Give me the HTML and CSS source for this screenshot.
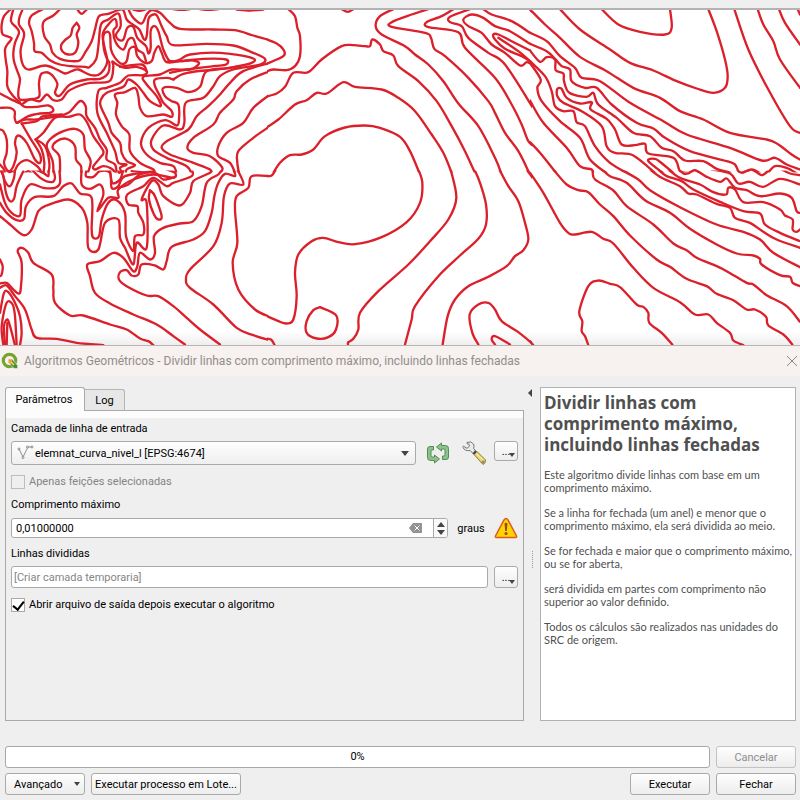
FILE: index.html
```html
<!DOCTYPE html>
<html lang="pt-BR">
<head>
<meta charset="utf-8">
<meta name="viewport" content="width=device-width, initial-scale=1">
<title>Algoritmos Geométricos</title>
<link rel="stylesheet" href="styles.css">
</head>
<body>
<div class="toolbar-edge"></div>
<svg class="map" viewBox="0 10 800 336" preserveAspectRatio="xMidYMid slice" aria-hidden="true"></svg>
<section class="dialog">
  <header class="titlebar">
    <svg class="logo" viewBox="0 0 18 18" aria-hidden="true">
      <circle cx="8.500" cy="8.500" r="6.200" fill="none" stroke="#72a52e" stroke-width="3.200"/>
      <path d="M8.500 9l3-1.500 5.200 6v3h-3.500L9.500 13z" fill="#4f8c35" stroke="#f7f1ef" stroke-width=".6"/>
      <path d="M7.500 7.200h3.800v2.200l-1.800 1.800h-2z" fill="#ee9c37"/>
      <path d="M10 10l3 3" stroke="#f2dc64" stroke-width="1.600"/>
    </svg>
    <span class="title">Algoritmos Geométricos - Dividir linhas com comprimento máximo, incluindo linhas fechadas</span>
    <button class="close" aria-label="Fechar janela"><svg viewBox="0 0 12 12"><path d="M1 1l10 10M11 1L1 11" fill="none" stroke="#8b8786"/></svg></button>
  </header>
  <div class="workspace">
    <div class="params">
      <div class="tabs" role="tablist">
        <button class="tab active" role="tab" aria-selected="true">Parâmetros</button>
        <button class="tab" role="tab" aria-selected="false">Log</button>
      </div>
      <form class="panel">
        <label class="caption" for="layer">Camada de linha de entrada</label>
        <div class="row layer-row">
          <div class="combo">
            <svg class="line-icon" viewBox="0 0 17 15" aria-hidden="true"><path d="M2 4l4 8 5-10h4" fill="none" stroke="#8c8c8c"/><g fill="#f4f4f4" stroke="#8c8c8c"><circle cx="2" cy="4" r="1"/><circle cx="6" cy="12.500" r="1"/><circle cx="10.500" cy="2" r="1"/><circle cx="15" cy="2" r="1"/></g></svg>
            <select id="layer"><option>elemnat_curva_nivel_l [EPSG:4674]</option></select>
            <span class="arrow"></span>
          </div>
          <button type="button" class="icon-button" aria-label="Iterar sobre a camada">
            <svg viewBox="0 0 24 22"><g fill="#8fc08d" stroke="#4f8f55" stroke-linejoin="round"><path d="M7.500 4.500H4Q1.500 4.500 1.500 7v8.500q0 3 3 3h4v2.500l5-4-5-4v2H6q-1 0-1-1V9q0-1 1-1h1.500z"/><path d="M16.500 17.500H20q2.500 0 2.500-2.500V6.500q0-3-3-3h-4V1l-5 4 5 4V7H18q1 0 1 1v5q0 1-1 1h-1.500z"/></g></svg>
          </button>
          <button type="button" class="icon-button" aria-label="Opções avançadas">
            <svg viewBox="0 0 24 24"><path d="M12 13.500l3-3 8.500 8.500q.5 3-2.500 4.500z" fill="#e9d679" stroke="#8b7b43"/><path d="M15 13l6 6" stroke="#fff2a8"/><path d="M5 1.500q4-2 6.500 1.500 1 2 .2 4.500l2.300 3-2.800 2.300-3-3.300Q3 10.500 1 6.500l.4-1.400L5 7.300l2.500-2L6.800 3 5 2.700z" fill="#e8ebe8" stroke="#747775"/><path d="M14 10l-2.700 3" stroke="#444" stroke-width="2"/><circle cx="21" cy="21" r="1" fill="#fff" stroke="#77693b"/></svg>
          </button>
          <button type="button" class="browse layer-browse" aria-label="Escolher camada">...<span class="arrow small"></span></button>
        </div>
        <label class="check disabled"><input type="checkbox" disabled>Apenas feições selecionadas</label>
        <label class="caption" for="length">Comprimento máximo</label>
        <div class="row">
          <div class="spin">
            <input id="length" type="text" value="0,01000000">
            <button type="button" class="clear" aria-label="Limpar"><svg viewBox="0 0 13 10"><path d="M0 5l4-5h9v10H4z" fill="#929292"/><path d="M5.500 2.500l5 5m0-5l-5 5" stroke="#fff" fill="none"/></svg></button>
            <span class="steps"><button type="button" aria-label="Aumentar"><i class="arrow up"></i></button><button type="button" aria-label="Diminuir"><i class="arrow"></i></button></span>
          </div>
          <span class="unit">graus</span>
          <svg class="warning" viewBox="0 0 24 22" role="img" aria-label="Aviso"><path d="M12 1.500Q13 1.500 14 3l8.500 16q.5 1.500-1 1.500h-19Q1 20.500 1.500 19L10 3q1-1.500 2-1.500z" fill="#ffd400" stroke="#df5a1d" stroke-width="1.500"/><path d="M10.500 6.500Q12 5 13.500 6.500L12.800 14h-1.600z" fill="#954d17"/><circle cx="12" cy="16.500" r="1.500" fill="#954d17"/></svg>
        </div>
        <label class="caption" for="output">Linhas divididas</label>
        <div class="row">
          <input class="output" id="output" type="text" placeholder="[Criar camada temporaria]">
          <button type="button" class="browse" aria-label="Escolher arquivo">...<span class="arrow small"></span></button>
        </div>
        <label class="check"><input type="checkbox" checked>Abrir arquivo de saída depois executar o algoritmo</label>
      </form>
    </div>
    <div class="splitter"><button class="collapse" aria-label="Recolher ajuda"></button><span class="grip"></span></div>
    <article class="help">
      <h1>Dividir linhas com comprimento máximo, incluindo linhas fechadas</h1>
      <p>Este algoritmo divide linhas com base em um comprimento máximo.</p>
      <p>Se a linha for fechada (um anel) e menor que o comprimento máximo, ela será dividida ao meio.</p>
      <p>Se for fechada e maior que o comprimento máximo, ou se for aberta,</p>
      <p>será dividida em partes com comprimento não superior ao valor definido.</p>
      <p>Todos os cálculos são realizados nas unidades do SRC de origem.</p>
    </article>
  </div>
  <footer class="footer">
    <div class="row"><div class="progress" role="progressbar" aria-valuenow="0" aria-label="Progresso">0%</div><button class="button" disabled>Cancelar</button></div>
    <div class="row"><button class="button advanced">Avançado<span class="arrow small"></span></button><button class="button batch">Executar processo em Lote...</button><span class="spacer"></span><button class="button">Executar</button><button class="button">Fechar</button></div>
  </footer>
</section>
<script src="contours.js"></script>
</body>
</html>
```
FILE: styles.css
```css
* { box-sizing: border-box; }
body { margin: 0; min-height: 100vh; display: flex; flex-direction: column; background: #fff; font: 11px/13px Roboto, "Open Sans", sans-serif; color: #000; }
button, input, select { font: inherit; color: inherit; margin: 0; }
button { padding: 0; }
svg { display: block; }
.toolbar-edge { height: 10px; flex: none; background: #efefef; border-bottom: 1px solid #b3b3b3; }
.toolbar-edge::before { content: ""; display: block; height: 8px; border-bottom: 1px solid #b3b3b3; }
.map { flex: 1 1 0; min-height: 0; width: 100%; background: linear-gradient(#fff 96%, #eee); }
.contour { fill: none; stroke: #dc202b; stroke-width: 7; stroke-linecap: round; stroke-linejoin: round; overflow: hidden; }
.dialog { flex: none; background: #efefef; border-top: 1px solid #b9b5b5; }
.titlebar { display: flex; align-items: center; gap: 5px; height: 30px; padding: 0 2px 0 1px; background: #f7f1ef; color: #918d8c; font-size: 12px; line-height: 16px; }
.logo { width: 18px; height: 18px; }
.title { flex: 1; white-space: nowrap; }
.close { width: 12px; height: 12px; border: 0; background: none; }
.workspace { display: flex; padding: 11px 4px 0 5px; }
.params { flex: 1; display: flex; flex-direction: column; min-width: 0; }
.tabs { display: flex; align-items: flex-end; height: 23px; position: relative; }
.tab { height: 21px; width: 40px; border: 1px solid #b4b4b4; border-left: 0; border-bottom: 0; border-radius: 0 3px 0 0; background: #e7e7e7; }
.tab.active { height: 24px; width: 80px; margin-bottom: -1px; padding-right: 2px; border: 1px solid #aaa; border-bottom: 0; border-radius: 3px 3px 0 0; background: #fcfcfc; }
.panel { flex: 1; display: flex; flex-direction: column; padding: 10px 5px; border: 1px solid #a9a9a9; border-top-color: #aaa; background: linear-gradient(#fcfcfc 7px, #efefef 7px); }
.row { display: flex; align-items: center; gap: 6px; min-height: 22px; }
.caption { line-height: 16px; margin: 7px 0 4px; }
.caption:first-child { margin-top: 0; }
.arrow { width: 0; height: 0; border: 4px solid transparent; border-top: 5px solid #444; border-bottom: 0; }
.arrow.small { border-width: 3px; border-top-width: 4px; border-bottom: 0; }
.arrow.up { transform: rotate(180deg); }
.combo { flex: 1; position: relative; height: 24px; }
.combo select { appearance: none; width: 100%; height: 100%; padding: 0 24px 0 23px; border: 1px solid #aaa; border-radius: 3px; background: linear-gradient(#fefefe, #efefef); }
.combo .arrow { position: absolute; right: 7px; top: 10px; pointer-events: none; }
.line-icon { position: absolute; left: 6px; top: 4px; width: 17px; height: 15px; }
.layer-row { gap: 10px; }
.icon-button { width: 24px; height: 24px; border: 0; background: none; }
.icon-button + .icon-button { margin-left: 2px; }
.browse { position: relative; width: 24px; height: 22px; border: 1px solid #aaa; border-radius: 3px; background: linear-gradient(#fefefe, #ededed); }
.browse .arrow { position: absolute; right: 2px; bottom: 3px; }
.layer-browse { height: 20px; margin-left: -2px; margin-bottom: 4px; }
.check { display: flex; align-items: center; gap: 4px; line-height: 16px; margin-top: 9px; }
.check input { appearance: none; width: 14px; height: 14px; border: 1px solid #aaa; background: #fff; display: grid; place-items: center; }
.check input:checked::after { content: ""; width: 5px; height: 9px; margin-bottom: 2px; border: solid #000; border-width: 0 2px 2px 0; transform: rotate(38deg); }
.check.disabled { color: #848484; }
.check.disabled input { background: #efefef; border-color: #bdbdbd; }
.spin { flex: 1; display: flex; align-items: center; height: 20px; border: 1px solid #aaa; border-radius: 3px; background: #fff; overflow: hidden; }
.spin input { flex: 1; min-width: 0; border: 0; padding: 0 4px; background: none; }
.clear { width: 13px; height: 10px; margin-right: 11px; border: 0; background: none; }
.steps { display: flex; flex-direction: column; justify-content: center; gap: 3px; width: 14px; height: 100%; border-left: 1px solid #aaa; background: #f9f9f9; }
.steps button { display: flex; justify-content: center; border: 0; background: none; }
.unit { width: 34px; text-align: center; }
.warning { width: 24px; height: 22px; }
.output { flex: 1; min-width: 0; height: 22px; padding: 0 2px; border: 1px solid #aaa; border-radius: 3px; background: #fff; }
.output::placeholder { color: #858585; opacity: 1; }
.splitter { width: 16px; display: flex; flex-direction: column; align-items: center; }
.collapse { width: 4px; height: 8px; margin-top: 2px; margin-right: 4px; border: 4px solid transparent; border-right-color: #444; border-left: 0; background: none; }
.grip { width: 1px; height: 17px; margin: auto 0; border-left: 1px dotted #999; }
.help { width: 256px; height: 334px; border: 1px solid #b2b2b2; background: #fff; padding: 4px 3px; color: #505050; font-family: Lato, sans-serif; }
.help h1 { margin: 0 0 13px; font: bold 17px/21px "Open Sans", sans-serif; }
.help p { margin: 0 0 12px; }
.footer { display: flex; flex-direction: column; gap: 5px; padding: 25px 4px 5px 5px; }
.button { height: 22px; width: 80px; border: 1px solid #aaa; border-radius: 3px; background: linear-gradient(#fefefe, #ededed); white-space: nowrap; }
.button:disabled { color: #8d8d8d; border-color: #c2c2c2; }
.advanced { display: flex; align-items: center; justify-content: space-between; padding: 0 4px 0 8px; }
.batch { width: 150px; }
.spacer { flex: 1; }
.progress { flex: 1; height: 22px; border: 1px solid #a8a8a8; border-radius: 3px; background: #fff; line-height: 20px; text-align: center; }
```
FILE: contours.js
```js
// Contour vertices by map sheet; sheet units are a third of a map unit.
// clip holds the left, top, right and bottom edge of the sheet in map units.
const sheets = [
  { x: 0, y: 0, clip: [0, 0, 268, 173], lines: [
    "32,29 12,50 5,75 7,103 20,110 35,117 22,135 15,150 17,180 22,215 22,260 40,290 60,308",
    "0,282 30,298 60,312 75,322 110,322 145,318 160,330 150,340 120,342 85,350 60,365 50,370 44,355 44,335 30,325 0,325",
    "40,29 33,65 50,85 57,100 45,130 40,160 42,185 52,215 60,240 55,275 60,300 100,298 118,290 117,250 125,222 150,222 172,252 165,280 180,288 210,255 260,240 300,238 325,220 328,190 322,180 312,150 310,110 320,97 330,105 333,150 345,175 365,193 380,185 388,150 405,143 412,170 435,190 455,185 463,160 475,140 485,160 500,188 540,185 580,183 597,192 570,210 515,210 480,225 430,232 440,255 470,290 482,320 450,305 430,280 410,255 385,240 370,262 320,280 303,300 302,320 325,370 335,400 360,430 365,460 380,485 405,497 380,510 378,525",
    "68,29 58,55 57,75 70,95 72,110 62,150 65,185 75,205 90,210 135,198 170,210 195,222 215,215 235,210 270,226 295,226 312,210 322,185 315,150 308,105 325,75 345,58 350,80 340,95 348,130 370,150 385,120 400,118 412,150 430,162 438,185",
    "128,29 95,48 87,70 95,95 102,130 104,155 125,160 150,182 180,195 215,200 255,202 268,203 288,180 295,140 303,75 325,60 355,42 362,80 348,105 355,120 370,120 382,85 400,82 412,115 438,140 445,162 452,145 452,95 463,80 475,95 490,150 510,185 540,180 570,165 660,160 755,175 755,190 690,205 620,215 600,262 565,278 530,265 490,265 495,290 515,305 535,315 537,360 530,378 495,362 445,385 423,430 440,465 480,490 520,500 530,525",
    "180,29 160,48 130,68 133,110 150,135 158,160 180,178 215,185 240,182 255,160 275,125 285,90 297,50 325,43 355,32 370,32 380,60 398,75 418,90 432,120 440,110 445,60 455,47 470,47 485,80 500,110 520,137 620,133 700,138 760,160 795,178 780,195 700,210 660,230 640,260 610,295 557,310 553,370 540,390 490,378 455,420 460,450 500,475 560,500 575,525",
    "230,70 238,85 230,105 235,130 225,160 205,165 187,155 183,138 195,122 212,108 218,85 230,70",
    "232,30 245,43 260,30",
    "65,315 90,300 120,305 140,285 160,302 185,300 205,275 240,258 270,250 320,248 335,235 340,200 337,186 350,195 375,205 410,202 440,215 430,227 385,228 360,250 320,265 295,275 292,340 320,400 345,455 355,490 380,495 360,505 370,525",
    "440,215 425,195 360,202", "520,240 500,235 465,240 465,260 480,290 490,310 515,335 515,352 490,345 440,350 420,325 415,290 405,265 375,278 345,285 352,310 348,345 365,380 388,405 390,455 420,490 460,510 455,520 395,515",
    "510,220 560,210 640,200 678,195 678,180 610,178 540,185 505,185", "520,240 545,225 585,216 650,210 720,200",
    "385,29 400,55 425,72 440,45 455,32 480,40 510,70 540,88 640,90 705,92 760,108 810,122",
    "400,30 418,34 438,29", "520,29 545,31 570,29", "600,29 625,31 655,29", "710,30 750,33 790,30",
    "810,190 730,215 690,250 660,285 625,320 590,350 565,390 500,425 485,445 510,465 580,490 630,510 630,525",
    "810,215 750,240 710,275 700,300 660,340 640,375 580,415 562,445 580,460 630,470 667,505 655,525",
    "810,285 760,325 730,370 680,400 655,440 655,470 690,490 707,525", "810,380 760,415 715,455 712,490 718,525",
    "50,370 75,360 110,360 170,350 205,340 240,305 257,320 260,350 285,385 300,420 320,450 320,480 345,495 350,525",
    "65,372 90,415 120,465 120,490 105,480 80,430 55,408 45,430 50,460 40,500 25,515 12,490 20,460 20,420 10,395 0,390",
    "65,372 110,365 130,350 185,345", "107,420 130,400 165,355 205,352 240,345 262,370 280,410 310,455 300,475 280,500 285,510 310,500 335,508 350,525",
    "107,420 125,450 133,490 130,525", "107,420 135,440 148,490 145,525",
    "160,525 158,485 140,440 155,415 190,395 225,388 250,405 255,450 272,485 262,525",
    "180,525 178,470 158,445 170,425 200,418 225,440 228,480 243,500 243,525",
    "40,525 55,495 80,482 105,495 120,510 125,525", "68,525 85,515 98,525", "0,495 12,510 15,525"
  ] },
  { x: 0, y: 170, clip: [0, 171, 268, 350], lines: [
    "5,0 15,35 30,50 42,25 45,0", "0,0 10,20 18,70 30,95 42,88 50,50 70,5", "15,0 30,8 42,0", "105,0 130,10 145,20 145,0", "95,0 125,28 155,38 165,25 160,0",
    "0,45 15,100 35,130 60,138 65,90 90,45 130,55 165,55 180,40 178,0",
    "0,100 20,130 50,152 72,148 78,110 105,82 160,80 190,50 215,42 240,72 275,85 275,180 280,205 297,200 305,150 325,100 350,92 375,130 378,200 400,245 405,200 430,195 430,160 415,130 412,110 385,105 382,75 430,50 460,25 500,50 520,40 575,20 575,0",
    "0,140 30,165 70,197 95,180 115,125 140,108 205,90 245,115 262,160 265,235 295,240 315,160 355,150 360,205 375,235 400,285 410,220 440,235 440,100 425,90 455,35 475,45 490,80 540,108 570,70 580,35 630,10 632,0",
    "245,0 245,45 270,58 300,45 310,75 292,125 325,85 355,85 355,60 400,30 460,15 520,25 525,10 500,0",
    "260,0 258,20 280,22 300,5 330,10 335,55 355,50 375,20 460,5", "330,0 337,40 360,30 370,0", "355,0 358,10 375,0", "355,55 385,45 420,15 465,10 490,30 525,22",
    "450,62 465,80 485,140 475,150 462,135 447,90 450,62",
    "665,0 655,15 620,40 605,110 580,155 540,162 490,175 462,200 465,250 450,270 420,250 412,290 400,305 370,265 340,250 300,275 262,285 270,320 285,370 330,402 400,435 470,465 520,500 555,525",
    "700,0 705,20 675,13 655,40 643,80 635,130 615,185 580,210 515,232 500,275 490,300 465,288 425,285 415,315 395,318 380,302 360,308 357,330 380,350 440,378 475,380 520,410 560,445 600,480 660,525",
    "712,0 730,45 690,42 672,80 665,160 640,230 570,300 558,330 570,355 640,405 710,475 760,497 810,512",
    "810,20 755,20 745,55 710,80 705,120 712,220 698,280 715,360 765,420 810,442",
    "0,342 20,340 40,360 55,372 62,360 65,280 53,245 65,235 85,250 100,280 155,315 160,360 165,400 210,438 250,438 330,465 380,480 420,507 445,515 460,527",
    "0,355 20,348 45,380 75,420 95,480 110,505 170,508 230,520 310,527",
    "0,430 12,370 25,368 45,400 60,440 65,490 60,527", "10,527 5,470 20,400 38,405 45,440 50,527", "15,527 12,470 22,450 30,470 45,527", "20,527 22,460", "0,270 8,290 5,315 0,320"
  ] },
  { x: 265, y: 0, clip: [267, 0, 532, 173], lines: [
    "70,29 90,50 97,85 105,110 105,170 90,200 65,212 25,210 0,218", "0,118 35,132 55,150 55,170 0,195",
    "0,292 35,282 60,262 85,220 130,218 170,180 230,140 265,137 300,140 315,140 322,120 345,135 355,155 385,168 400,200 460,245 515,305 560,380 600,455 632,525",
    "0,387 40,360 90,315 125,302 155,280 185,282 235,248 270,262 350,270 400,295 450,335 500,405 535,460 562,525",
    "22,525 45,490 75,467 110,465 145,450 180,410 240,384 300,378 345,385 405,412 435,455 465,525", "230,29 248,37 265,29",
    "385,29 345,50 332,80 350,105 420,140 450,165 490,195 535,245 580,312 640,380 690,475 710,525",
    "490,29 440,45 380,68 380,82 480,100 498,115 508,148 540,170 610,235 670,305 690,340 720,400 760,455 795,525",
    "565,29 530,50 485,68 490,83 580,98 600,145 690,235 740,315 770,375 790,425 810,443", "615,29 555,52 555,68 590,80 610,115 670,160 720,195 810,335",
    "795,133 735,95 690,80 655,55 620,45 595,60 610,80 650,100 680,135 720,160 765,198 785,188 800,195", "655,29 680,45 740,65 795,100", "780,19 795,30 810,45",
    "795,153 740,125 700,105 685,105 690,120 720,148 770,170 795,185", "700,115 760,155 795,185"
  ] },
  { x: 265, y: 170, clip: [267, 171, 532, 350], lines: [
    "460,0 472,40 465,100 425,158 350,203 270,224 220,218 175,205 140,215 100,255 90,310 95,380 85,450 65,462 40,455 0,437", "0,20 20,18 33,0", "0,507 18,510 28,525",
    "165,413 213,437 213,480 190,503 155,507 125,490 125,455 145,422 165,413", "557,0 574,85 550,150 495,215 430,285 340,365 285,430 280,480 265,508 250,518 249,525",
    "628,0 645,40 663,105 663,165 640,208 585,258 520,320 450,410 440,450 420,525", "703,0 730,50 760,95 780,160 790,210 775,242 750,260 725,290 670,322 610,350 570,390 548,440 533,525", "785,0 810,35",
    "640,525 622,490 614,435 640,405 670,400 690,420 710,455 760,488 805,525", "690,525 680,510 690,500 735,525"
  ] },
  { x: 530, y: 0, clip: [530, 0, 800, 173], lines: [
    "0,30 45,75 90,115 150,172 230,215 310,265 390,295 450,335 520,360 600,400 710,420 745,435 785,465 810,480", "90,29 150,90 240,150 300,190 370,213 440,245 500,267 550,280 585,265 593,230 585,180 560,95 535,29", "215,29 265,75 330,97 405,105 425,85 420,29",
    "613,29 655,150 715,270 780,380 810,400", "683,29 700,75 730,125 750,180 810,265", "747,29 765,70 810,135", "803,29 810,45", "0,100 50,125 90,170 135,205 155,235 210,245 300,310 400,365 470,405 600,445 695,483 735,475 770,495 810,510",
    "0,133 50,155 75,178 95,200 120,210 125,245 165,265 200,265 245,315 320,370 370,387 405,415 480,455 590,485 615,495 630,520 665,510 695,525", "0,153 30,187 50,173 75,180 77,212 100,222 102,245 118,280 170,292 190,280 205,315 260,355 310,400 360,410 395,445 430,455 465,483 520,485 560,508 600,520 615,540",
    "0,185 45,230 65,275 75,320 100,335 130,335 140,368 165,380 195,440 240,490 300,525", "0,190 32,240 22,265 35,305 90,365 150,415 180,480 235,525", "0,303 40,370 110,445 150,500 185,510 190,525", "0,428 30,460 82,525",
    "380,525 310,468 255,460 230,440 215,380 155,335 100,310 82,290 82,268 95,268 110,295 150,312 185,308 182,330 230,358 255,390 275,435 315,437 345,433 355,462 430,475 450,515 475,520 495,512 515,525", "405,525 355,485 375,478 400,495 435,525", "710,525 735,500 770,505 800,522"
  ] },
  { x: 530, y: 170, clip: [530, 171, 800, 350], lines: [
    "0,10 40,70 90,160 115,190 135,195 185,187 220,208 250,222 310,295 370,355 450,398 495,435 535,435 560,460 600,490 610,513 640,527", "70,0 110,45 145,62 175,68 210,105 250,140 300,198 380,270 420,292 470,328 530,350 560,373 610,392 650,420 675,420 708,442 715,468 760,495 787,525",
    "185,-5 188,5 195,30 250,63 290,110 370,165 430,222 470,242 500,265 560,290 590,305 650,340 670,345 710,377 770,410 810,457", "217,0 240,20 290,40 345,92 420,130 480,178 560,225 620,252 670,258 690,268 695,285 750,317 780,322 788,340 810,350",
    "272,0 325,30 360,62 450,113 560,165 640,187 690,210 730,250 810,293", "360,0 395,25 450,50 475,72 500,75 560,103 600,115 615,145 660,160 700,187 740,210 810,235", "385,0 410,20 455,35 490,60 570,97 640,125 690,132 705,165 750,190 810,215",
    "415,0 450,25 510,45 550,68 588,75 595,55 615,60 640,98 700,98 750,120 765,138 788,150 788,180 800,187 810,180", "448,0 460,12 475,12 495,2 530,22 570,37 590,27 615,55 650,62 690,80 750,72 785,85 800,125 810,130", "545,0 600,12 625,42 660,37 700,52 750,28 810,45", "622,0 635,10 665,0 695,17 718,0", "755,0 780,12 810,17",
    "175,527 165,500 155,485 157,455 148,425 175,350 205,333 240,343 270,353 320,405 340,412 355,430 358,460 395,490 427,525", "0,515 10,527"
  ] }
];

const NS = "http://www.w3.org/2000/svg";
const map = document.querySelector(".map");

// Joins the vertices with a smooth curve through each of them.
function smooth(text) {
  const p = text.split(" ").map(s => s.split(",").map(Number));
  let d = "M" + p[0];
  for (let i = 0; i < p.length - 1; i++) {
    const a = p[i - 1] || p[i], b = p[i], c = p[i + 1], e = p[i + 2] || c;
    d += "C" + [b[0] + (c[0] - a[0]) / 6, b[1] + (c[1] - a[1]) / 6, c[0] - (e[0] - b[0]) / 6, c[1] - (e[1] - b[1]) / 6, c[0], c[1]];
  }
  return d;
}

for (const sheet of sheets) {
  const [left, top, right, bottom] = sheet.clip;
  const w = right - left, h = bottom - top;
  const frame = document.createElementNS(NS, "svg");
  frame.setAttribute("class", "contour");
  frame.setAttribute("x", left);
  frame.setAttribute("y", top);
  frame.setAttribute("width", w);
  frame.setAttribute("height", h);
  frame.setAttribute("viewBox", [(left - sheet.x) * 3, (top - sheet.y) * 3, w * 3, h * 3].join(" "));
  for (const line of sheet.lines) {
    const path = document.createElementNS(NS, "path");
    path.setAttribute("d", smooth(line));
    frame.append(path);
  }
  map.append(frame);
}
```
